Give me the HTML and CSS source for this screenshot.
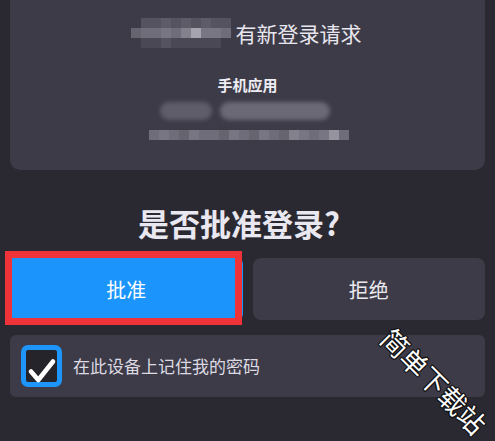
FILE: index.html
```html
<!DOCTYPE html>
<html lang="zh-CN">
<head>
<meta charset="utf-8">
<title>批准登录</title>
<link rel="stylesheet" href="styles.css">
</head>
<body>
<div class="page">
  <section class="top-card">
    <div class="headline">
      <div class="mosaic mosaic-name">
        <i class="m0"></i><i class="m2"></i><i class="m2"></i><i class="m3"></i><i class="m2"></i><i class="m3"></i><i class="m2"></i><i class="m3"></i><i class="m2"></i><i class="m2"></i>
        <i class="m4"></i><i class="m5"></i><i class="m5"></i><i class="m6"></i><i class="m5"></i><i class="m7"></i><i class="m9"></i><i class="m6"></i><i class="m6"></i><i class="m5"></i>
        <i class="m0"></i><i class="m1"></i><i class="m1"></i><i class="m2"></i><i class="m1"></i><i class="m1"></i><i class="m1"></i><i class="m1"></i><i class="m1"></i><i class="m0"></i>
      </div>
      <span class="headline-text">有新登录请求</span>
    </div>
    <div class="app-label">手机应用</div>
    <div class="blur-line">
      <span class="blur-a"></span><span class="blur-b"></span>
    </div>
    <div class="mosaic mosaic-line">
      <i class="m5"></i><i class="m6"></i><i class="m5"></i><i class="m4"></i><i class="m6"></i><i class="m5"></i><i class="m5"></i><i class="m4"></i><i class="m6"></i><i class="m5"></i>
      <i class="m4"></i><i class="m6"></i><i class="m5"></i><i class="m4"></i><i class="m7"></i><i class="m6"></i><i class="m5"></i><i class="m6"></i><i class="m8"></i><i class="m5"></i>
    </div>
  </section>

  <h1 class="title">是否批准登录?</h1>

  <div class="actions">
    <button class="btn btn-approve">批准</button>
    <button class="btn btn-reject">拒绝</button>
  </div>

  <label class="remember">
    <span class="checkbox">
      <svg viewBox="0 0 41 42" width="41" height="42" aria-hidden="true">
        <path d="M10 26.5 L17.3 35 L32 16.5" fill="none" stroke="#ffffff" stroke-width="4.6" stroke-linecap="round" stroke-linejoin="round"/>
      </svg>
    </span>
    <span class="remember-text">在此设备上记住我的密码</span>
  </label>

  <div class="watermark">简单下载站</div>
</div>
</body>
</html>
```

FILE: styles.css
```css
html, body {
  margin: 0;
  padding: 0;
}

body {
  background: #2a2931;
  font-family: "Noto Sans CJK SC", "Noto Sans", sans-serif;
  color: #e6e4ec;
}

.page {
  position: relative;
  width: 495px;
  height: 441px;
  overflow: hidden;
}

.top-card {
  margin: 0 10px;
  height: 170px;
  box-sizing: border-box;
  padding-top: 18px;
  background: #3d3b47;
  border-radius: 0 0 10px 10px;
  display: flex;
  flex-direction: column;
  align-items: center;
}

.headline {
  display: flex;
  align-items: center;
  gap: 5px;
  height: 30px;
  margin-left: -3px;
}

.headline-text {
  font-size: 21px;
  line-height: 30px;
  color: #e8e6ee;
}

.mosaic {
  display: grid;
  grid-auto-rows: 10px;
}

.mosaic i {
  display: block;
}

.mosaic-name {
  grid-template-columns: repeat(10, 10px);
  width: 100px;
  height: 30px;
}

.mosaic-line {
  grid-template-columns: repeat(20, 10px);
  width: 200px;
  height: 10px;
  margin-top: 10px;
  margin-left: 3px;
}

.m0 { background: transparent; }
.m1 { background: #4a4855; }
.m2 { background: #55535f; }
.m3 { background: #5d5b67; }
.m4 { background: #66646f; }
.m5 { background: #6f6d79; }
.m6 { background: #787682; }
.m7 { background: #83818c; }
.m8 { background: #95939d; }
.m9 { background: #a6a4ae; }

.app-label {
  margin-top: 27px;
  font-size: 15px;
  line-height: 20px;
  font-weight: 700;
  color: #eeecf3;
}

.blur-line {
  margin-top: 7px;
  width: 170px;
  height: 18px;
  display: flex;
  gap: 8px;
  filter: blur(2px);
  margin-left: -5px;
}

.blur-a {
  width: 52px;
  border-radius: 9px;
  background: #5f5d69;
}

.blur-b {
  flex: 1;
  border-radius: 9px;
  background: #6b6975;
}

.title {
  margin: 33px 0 0;
  text-align: center;
  font-size: 31px;
  line-height: 40px;
  font-weight: 700;
  color: #e9e7ef;
  padding-right: 17px;
}

.actions {
  display: flex;
  gap: 10px;
  margin: 15px 10px 0;
}

.btn {
  flex: 1;
  height: 62px;
  border: none;
  border-radius: 8px;
  font-family: "Noto Sans CJK SC", "Noto Sans", sans-serif;
  font-size: 20px;
  padding: 0;
  cursor: pointer;
}

.btn-approve {
  position: relative;
  background: #1b95fc;
  color: #ffffff;
  border-radius: 2px 6px 6px 2px;
}

.btn-approve::after {
  content: "";
  position: absolute;
  top: -7px;
  left: -5px;
  right: 1px;
  bottom: -5px;
  border: 7px solid #ef3339;
}

.btn-reject {
  background: #3d3b47;
  color: #ebe9f0;
}

.remember {
  margin: 15px 10px 0;
  height: 62px;
  border-radius: 6px;
  background: #3d3b47;
  display: flex;
  align-items: center;
  padding-left: 11px;
  gap: 11px;
}

.checkbox {
  position: relative;
  width: 41px;
  height: 42px;
  box-sizing: border-box;
  border: 5px solid #1d95fb;
  border-radius: 7px;
  background: #25242a;
  flex: none;
}

.checkbox svg {
  position: absolute;
  left: -5px;
  top: -5px;
}

.remember-text {
  font-size: 17px;
  line-height: 24px;
  color: #dcdae2;
}

.watermark {
  position: absolute;
  left: 364px;
  top: 366px;
  width: 140px;
  text-align: center;
  font-size: 27px;
  line-height: 30px;
  font-weight: 400;
  color: #ffffff;
  transform: rotate(45deg);
  text-shadow:
    1px 1px 0 #111, -1px -1px 0 #111, 1px -1px 0 #111, -1px 1px 0 #111,
    0 1px 0 #111, 0 -1px 0 #111, 1px 0 0 #111, -1px 0 0 #111;
}
```
